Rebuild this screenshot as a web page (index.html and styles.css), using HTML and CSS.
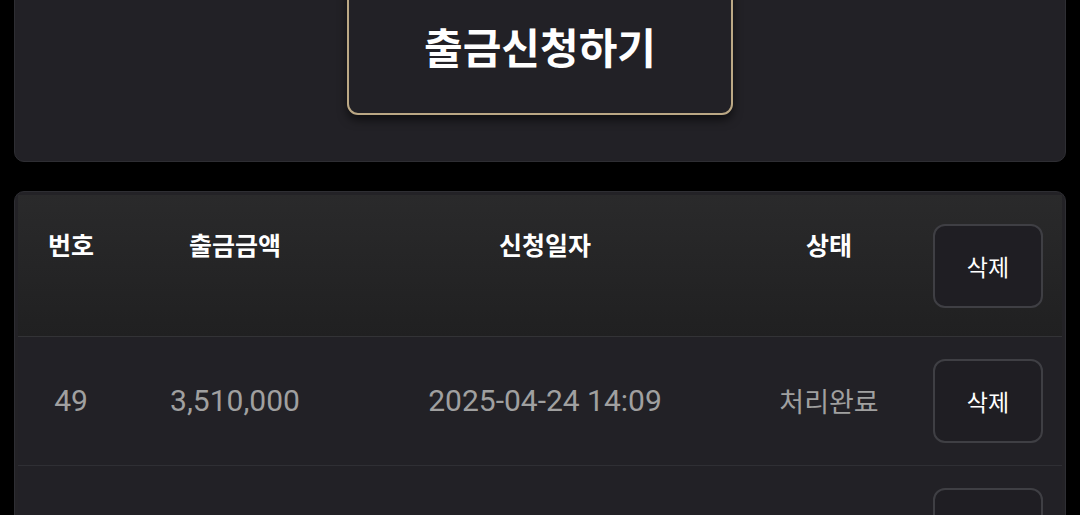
FILE: index.html
```html
<!DOCTYPE html>
<html lang="ko">
<head>
<meta charset="utf-8">
<title>출금신청</title>
<link rel="stylesheet" href="styles.css">
</head>
<body>
<div class="page">
  <section class="apply-card">
    <button class="apply-btn" type="button">출금신청하기</button>
  </section>

  <section class="list-card">
    <div class="table">
      <div class="thead grid">
        <div class="th">번호</div>
        <div class="th">출금금액</div>
        <div class="th">신청일자</div>
        <div class="th">상태</div>
        <div class="cell-btn"><button class="del-btn" type="button">삭제</button></div>
      </div>
      <div class="trow grid">
        <div class="td num">49</div>
        <div class="td num">3,510,000</div>
        <div class="td num">2025-04-24 14:09</div>
        <div class="td status">처리완료</div>
        <div class="cell-btn"><button class="del-btn" type="button">삭제</button></div>
      </div>
      <div class="trow grid">
        <div class="td num"></div>
        <div class="td num"></div>
        <div class="td num"></div>
        <div class="td status"></div>
        <div class="cell-btn"><button class="del-btn" type="button" aria-label="삭제"></button></div>
      </div>
    </div>
  </section>
</div>
</body>
</html>
```

FILE: styles.css
```css
html, body {
  margin: 0;
  padding: 0;
  background: #000;
  overflow: hidden;
}

body {
  font-family: "Roboto", "Noto Sans CJK KR", sans-serif;
  color: #fff;
}

.page {
  padding: 0 14px;
}

.apply-card {
  margin-top: -66px;
  padding: 46px 0;
  background: #222126;
  border: 1px solid #2e2e33;
  border-radius: 10px;
  display: flex;
  justify-content: center;
}

.apply-btn {
  width: 386px;
  height: 134px;
  box-sizing: border-box;
  background: #222126;
  border: 2px solid #bba885;
  border-radius: 11px;
  box-shadow: 0 5px 10px rgba(0, 0, 0, 0.55);
  color: #fff;
  font-family: "Noto Sans CJK KR", sans-serif;
  font-weight: 700;
  font-size: 42px;
  line-height: 1;
  padding: 0 0 4px;
  cursor: pointer;
}

.list-card {
  margin-top: 29px;
  background: #232226;
  border: 1px solid #2e2e33;
  border-radius: 10px;
  padding: 3px;
}

.grid {
  display: grid;
  grid-template-columns: 106px 222px 398px 170px 148px;
  align-items: center;
  justify-items: center;
}

.thead {
  height: 141px;
  background: linear-gradient(180deg, #2a2a2b 0%, #202021 100%);
  border-bottom: 1px solid #333336;
}

.th {
  align-self: start;
  padding-top: 32px;
  font-family: "Noto Sans CJK KR", sans-serif;
  font-weight: 700;
  font-size: 25px;
  line-height: 34px;
  color: #fff;
}

.trow {
  height: 128px;
  background: #222126;
  border-bottom: 1px solid #2f2f34;
}

.td {
  color: #a0a0a0;
  line-height: 36px;
}

.num {
  font-size: 30px;
}

.status {
  font-family: "Noto Sans CJK KR", sans-serif;
  font-size: 27px;
}

.cell-btn {
  display: flex;
  justify-content: center;
  width: 100%;
}

.del-btn {
  width: 110px;
  height: 84px;
  box-sizing: border-box;
  background: #1f1e23;
  border: 2px solid #3f3f44;
  border-radius: 12px;
  color: #fff;
  font-family: "Noto Sans CJK KR", sans-serif;
  font-size: 23px;
  padding: 0;
  cursor: pointer;
}
```
